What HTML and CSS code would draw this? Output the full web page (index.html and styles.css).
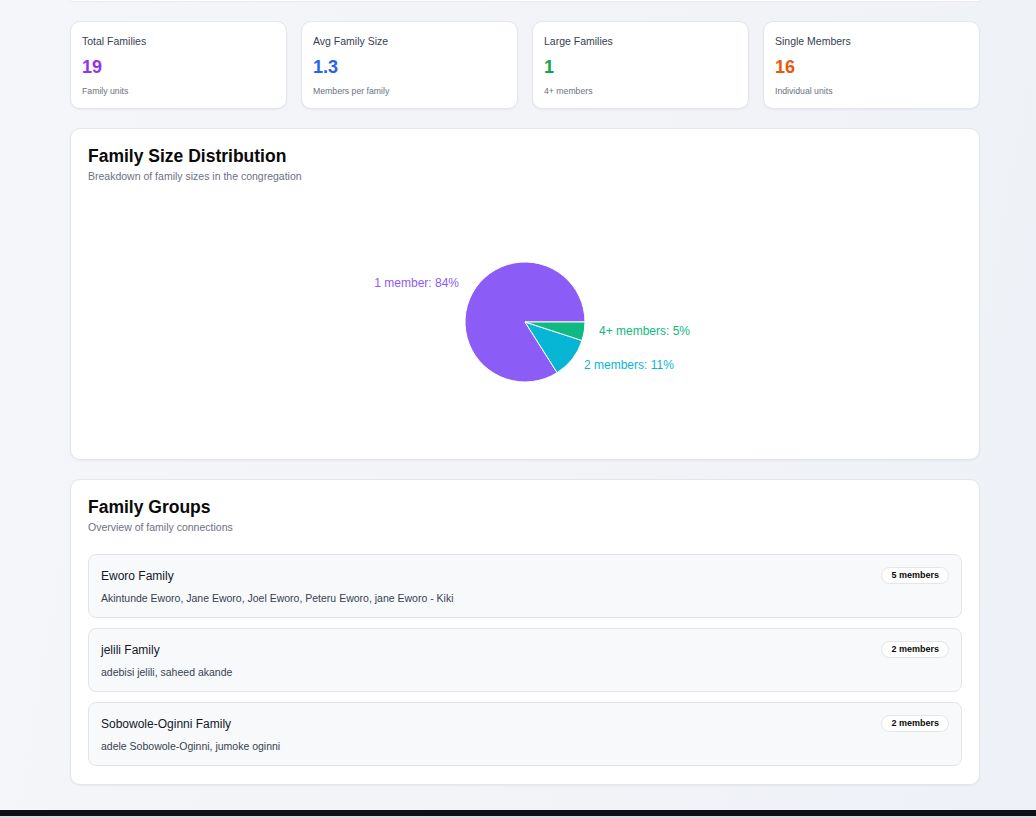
FILE: index.html
```html
<!DOCTYPE html>
<html lang="en">
<head>
<meta charset="utf-8">
<title>Family Analytics</title>
<link rel="stylesheet" href="styles.css">
</head>
<body>
<main class="page">
  <div class="prev-card"></div>

  <section class="stats">
    <div class="card stat">
      <div class="stat-title">Total Families</div>
      <div class="stat-value purple">19</div>
      <div class="stat-sub">Family units</div>
    </div>
    <div class="card stat">
      <div class="stat-title">Avg Family Size</div>
      <div class="stat-value blue">1.3</div>
      <div class="stat-sub">Members per family</div>
    </div>
    <div class="card stat">
      <div class="stat-title">Large Families</div>
      <div class="stat-value green">1</div>
      <div class="stat-sub">4+ members</div>
    </div>
    <div class="card stat">
      <div class="stat-title">Single Members</div>
      <div class="stat-value orange">16</div>
      <div class="stat-sub">Individual units</div>
    </div>
  </section>

  <section class="card panel">
    <h2 class="panel-title">Family Size Distribution</h2>
    <p class="panel-sub">Breakdown of family sizes in the congregation</p>
    <svg class="chart" width="874" height="258" viewBox="0 0 874 258">
      <g stroke="#ffffff" stroke-width="1">
        <path d="M437 139 L497 139 A60 60 0 1 0 469.13 189.66 Z" fill="#8b5cf6"/>
        <path d="M437 139 L469.13 189.66 A60 60 0 0 0 494.06 157.54 Z" fill="#06b6d4"/>
        <path d="M437 139 L494.06 157.54 A60 60 0 0 0 497 139 Z" fill="#10b981"/>
      </g>
      <text x="371" y="104" text-anchor="end" class="lbl" fill="#8b5cf6">1 member: 84%</text>
      <text x="511" y="152" text-anchor="start" class="lbl" fill="#10b981">4+ members: 5%</text>
      <text x="496" y="186" text-anchor="start" class="lbl" fill="#06b6d4">2 members: 11%</text>
    </svg>
  </section>

  <section class="card panel">
    <h2 class="panel-title">Family Groups</h2>
    <p class="panel-sub">Overview of family connections</p>
    <div class="groups">
      <div class="group">
        <div class="group-head">
          <span class="group-name">Eworo Family</span>
          <span class="badge">5 members</span>
        </div>
        <div class="group-members">Akintunde Eworo, Jane Eworo, Joel Eworo, Peteru Eworo, jane Eworo - Kiki</div>
      </div>
      <div class="group">
        <div class="group-head">
          <span class="group-name">jelili Family</span>
          <span class="badge">2 members</span>
        </div>
        <div class="group-members">adebisi jelili, saheed akande</div>
      </div>
      <div class="group">
        <div class="group-head">
          <span class="group-name">Sobowole-Oginni Family</span>
          <span class="badge">2 members</span>
        </div>
        <div class="group-members">adele Sobowole-Oginni, jumoke oginni</div>
      </div>
    </div>
  </section>
</main>
<footer class="bottom-bar"></footer>
</body>
</html>
```

FILE: styles.css
```css
* { box-sizing: border-box; }

html, body {
  margin: 0;
  padding: 0;
}

body {
  font-family: "Liberation Sans", Arial, sans-serif;
  background: linear-gradient(100deg, #f5f6f9 0%, #f1f3f7 60%, #eef1f7 100%);
  color: #111827;
  height: 818px;
  overflow: hidden;
  display: flex;
  flex-direction: column;
}

.page {
  width: 910px;
  margin-left: 70px;
  display: flex;
  flex-direction: column;
  gap: 19px;
}

.prev-card {
  height: 2px;
  background: #ffffff;
  border: 1px solid #ebe6ef;
  border-top: none;
  border-radius: 0 0 10px 10px;
}

.card {
  background: #ffffff;
  border: 1px solid #e3e6eb;
  border-radius: 10px;
  box-shadow: 0 1px 2px rgba(16, 24, 40, 0.05);
}

.stats {
  display: grid;
  grid-template-columns: repeat(4, 1fr);
  gap: 14px;
}

.stat {
  padding: 12px 11px 11px;
  height: 88px;
}

.stat-title {
  font-size: 10.5px;
  line-height: 14px;
  color: #374151;
}

.stat-value {
  font-size: 18px;
  font-weight: 700;
  line-height: 20px;
  margin-top: 9px;
}

.purple { color: #9333ea; }
.blue { color: #2563eb; }
.green { color: #16a34a; }
.orange { color: #ea580c; }

.stat-sub {
  font-size: 8.7px;
  line-height: 12px;
  color: #6b7280;
  margin-top: 8px;
}

.panel {
  padding: 16px 17px 18px;
}

.panel-title {
  margin: 0;
  font-size: 17.5px;
  line-height: 22px;
  font-weight: 700;
  color: #0a0a0a;
}

.panel-sub {
  margin: 2px 0 0;
  font-size: 10.5px;
  line-height: 14px;
  color: #6b7280;
}

.chart {
  display: block;
}

.lbl {
  font-family: "Liberation Sans", Arial, sans-serif;
  font-size: 12px;
}

.groups {
  margin-top: 20px;
  display: flex;
  flex-direction: column;
  gap: 10px;
}

.group {
  background: #f8f9fb;
  border: 1px solid #e3e5e9;
  border-radius: 8px;
  padding: 13px 12px 12px 12px;
  height: 64px;
}

.group-head {
  display: flex;
  justify-content: space-between;
  align-items: center;
  height: 15px;
}

.group-name {
  font-size: 12px;
  color: #111827;
}

.badge {
  font-size: 9px;
  font-weight: 700;
  color: #0a0a0a;
  background: #ffffff;
  border: 1px solid #e3e5e9;
  border-radius: 999px;
  height: 17px;
  line-height: 15px;
  padding: 0 9px;
}

.group-members {
  margin-top: 8px;
  font-size: 10.5px;
  line-height: 14px;
  color: #374151;
}

.bottom-bar {
  margin-top: auto;
  height: 8px;
  background: #0f0f17;
  border-bottom: 2px solid #dcdcdc;
}
```
